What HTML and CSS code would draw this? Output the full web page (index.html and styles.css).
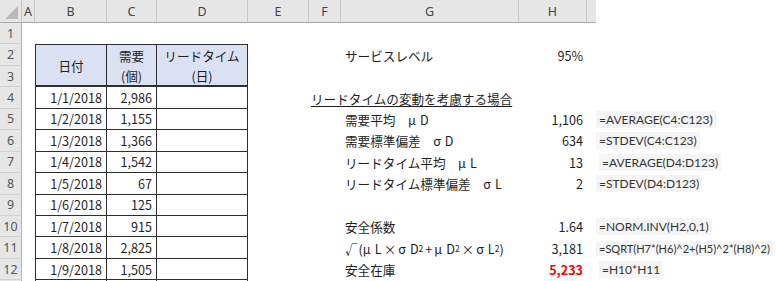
FILE: index.html
```html
<!DOCTYPE html>
<html lang="ja">
<head>
<meta charset="utf-8">
<link rel="stylesheet" href="styles.css">
</head>
<body>
<div class="sheet">
  <!-- column headers -->
  <div class="corner"></div>
  <div class="ch">A</div>
  <div class="ch">B</div>
  <div class="ch">C</div>
  <div class="ch">D</div>
  <div class="ch">E</div>
  <div class="ch">F</div>
  <div class="ch">G</div>
  <div class="ch">H</div>
  <div class="ch ch-end"></div>
  <div class="blank"></div>

  <!-- row 1 -->
  <div class="rh">1</div>
  <div class="c span10"></div>

  <!-- row 2 -->
  <div class="rh">2</div>
  <div class="c"></div>
  <div class="th th-left th-merge">日付</div>
  <div class="th th-top">需要</div>
  <div class="th th-top">リードタイム</div>
  <div class="c span2"></div>
  <div class="c">サービスレベル</div>
  <div class="c num">95%</div>
  <div class="c span2"></div>

  <!-- row 3 -->
  <div class="rh">3</div>
  <div class="c"></div>
  <div class="th th-bottom">(個)</div>
  <div class="th th-bottom">(日)</div>
  <div class="c span2"></div>
  <div class="c"></div>
  <div class="c"></div>
  <div class="c span2"></div>

  <!-- row 4 -->
  <div class="rh">4</div>
  <div class="c"></div>
  <div class="td td-left num">1/1/2018</div>
  <div class="td num">2,986</div>
  <div class="td"></div>
  <div class="c"></div>
  <div class="c span2 heading"><span>リードタイムの変動を考慮する場合</span></div>
  <div class="c"></div>
  <div class="c span2"></div>

  <!-- row 5 -->
  <div class="rh">5</div>
  <div class="c"></div>
  <div class="td td-left num">1/2/2018</div>
  <div class="td num">1,155</div>
  <div class="td"></div>
  <div class="c span2"></div>
  <div class="c">需要平均　<span class="gk">μ</span>D</div>
  <div class="c num">1,106</div>
  <div class="c"></div>
  <div class="fx"><span class="fbox">=AVERAGE(C4:C123)</span></div>

  <!-- row 6 -->
  <div class="rh">6</div>
  <div class="c"></div>
  <div class="td td-left num">1/3/2018</div>
  <div class="td num">1,366</div>
  <div class="td"></div>
  <div class="c span2"></div>
  <div class="c">需要標準偏差　<span class="gk">σ</span>D</div>
  <div class="c num">634</div>
  <div class="c"></div>
  <div class="fx"><span class="fbox">=STDEV(C4:C123)</span></div>

  <!-- row 7 -->
  <div class="rh">7</div>
  <div class="c"></div>
  <div class="td td-left num">1/4/2018</div>
  <div class="td num">1,542</div>
  <div class="td"></div>
  <div class="c span2"></div>
  <div class="c">リードタイム平均　<span class="gk">μ</span>L</div>
  <div class="c num">13</div>
  <div class="c"></div>
  <div class="fx fx-shift"><span class="fbox">=AVERAGE(D4:D123)</span></div>

  <!-- row 8 -->
  <div class="rh">8</div>
  <div class="c"></div>
  <div class="td td-left num">1/5/2018</div>
  <div class="td num">67</div>
  <div class="td"></div>
  <div class="c span2"></div>
  <div class="c">リードタイム標準偏差　<span class="gk">σ</span>L</div>
  <div class="c num">2</div>
  <div class="c"></div>
  <div class="fx"><span class="fbox">=STDEV(D4:D123)</span></div>

  <!-- row 9 -->
  <div class="rh">9</div>
  <div class="c"></div>
  <div class="td td-left num">1/6/2018</div>
  <div class="td num">125</div>
  <div class="td"></div>
  <div class="c span6"></div>

  <!-- row 10 -->
  <div class="rh">10</div>
  <div class="c"></div>
  <div class="td td-left num">1/7/2018</div>
  <div class="td num">915</div>
  <div class="td"></div>
  <div class="c span2"></div>
  <div class="c">安全係数</div>
  <div class="c num">1.64</div>
  <div class="c"></div>
  <div class="fx"><span class="fbox">=NORM.INV(H2,0,1)</span></div>

  <!-- row 11 -->
  <div class="rh">11</div>
  <div class="c"></div>
  <div class="td td-left num">1/8/2018</div>
  <div class="td num">2,825</div>
  <div class="td"></div>
  <div class="c span2"></div>
  <div class="c"><span class="rad">√</span>(<span class="gk">μ</span>L<span class="op">×</span><span class="gk">σ</span>D<sup>2</sup><span class="op">+</span><span class="gk">μ</span>D<sup>2</sup><span class="op">×</span><span class="gk">σ</span>L<sup>2</sup>)</div>
  <div class="c num">3,181</div>
  <div class="c"></div>
  <div class="fx"><span class="fbox fbox-tight">=SQRT(H7*(H6)^2+(H5)^2*(H8)^2)</span></div>

  <!-- row 12 -->
  <div class="rh">12</div>
  <div class="c"></div>
  <div class="td td-left num">1/9/2018</div>
  <div class="td num">1,505</div>
  <div class="td"></div>
  <div class="c span2"></div>
  <div class="c">安全在庫</div>
  <div class="c num red">5,233</div>
  <div class="c"></div>
  <div class="fx fx-shift"><span class="fbox">=H10*H11</span></div>

  <!-- row 13 -->
  <div class="rh"></div>
  <div class="c"></div>
  <div class="td td-left num"></div>
  <div class="td num"></div>
  <div class="td"></div>
  <div class="c span6"></div>
</div>
</body>
</html>
```
FILE: styles.css
```css
html, body {
  margin: 0;
  padding: 0;
  background: #ffffff;
}
body {
  width: 780px;
  height: 281px;
  overflow: hidden;
}
.sheet {
  display: grid;
  grid-template-columns: 22px 13px 72px 50px 91px 61px 32px 178px 68px 9px 1fr;
  grid-template-rows: 23px repeat(13, 21.45px);
  font-family: "Noto Sans CJK JP", sans-serif;
  font-size: 12.6px;
  color: #1e1e1e;
}
.corner {
  position: relative;
  background: #e6e6e6;
  border-right: 1px solid #c4c4c4;
  border-bottom: 1px solid #a8a8a8;
}
.corner::after {
  content: "";
  position: absolute;
  right: 3px;
  bottom: 3px;
  width: 13px;
  height: 13px;
  background: #b9b9b9;
  clip-path: polygon(100% 0, 100% 100%, 0 100%);
}
.ch {
  background: #e6e6e6;
  border-right: 1px solid #c8c8c8;
  border-bottom: 1px solid #a8a8a8;
  display: flex;
  align-items: center;
  justify-content: center;
  font-family: "Noto Sans", sans-serif;
  font-size: 12.5px;
  color: #444;
  box-sizing: border-box;
}
.ch-end {
  border-right: none;
}
.blank {
  background: #fff;
}
.rh {
  background: #e6e6e6;
  border-right: 1px solid #b4b4b4;
  border-bottom: 1px solid #d2d2d2;
  display: flex;
  align-items: center;
  justify-content: center;
  font-family: "Noto Sans", sans-serif;
  font-size: 12.5px;
  color: #555;
  box-sizing: border-box;
}
.c {
  display: flex;
  align-items: center;
  padding: 0 4px;
  white-space: nowrap;
  min-width: 0;
}
.span2 { grid-column: span 2; }
.span3 { grid-column: span 3; }
.span6 { grid-column: span 6; }
.span10 { grid-column: span 10; }
.num {
  justify-content: flex-end;
}
.heading {
  padding-left: 2px;
}
.heading span {
  text-decoration: underline;
  text-underline-offset: 2px;
  text-decoration-thickness: 1px;
}
.red {
  color: #ff0000;
  font-weight: bold;
}
.gk {
  margin-right: 4px;
}
.op {
  padding: 0 2px;
}
.rad {
  margin-right: 1px;
}
sup {
  font-size: 8.5px;
  vertical-align: 5px;
  line-height: 0;
}
.th {
  background: #d9e1f2;
  border-right: 1px solid #2e2e2e;
  display: flex;
  align-items: center;
  justify-content: center;
  white-space: nowrap;
  box-sizing: border-box;
}
.th-left {
  border-left: 1px solid #2e2e2e;
}
.th-top {
  border-top: 1px solid #2e2e2e;
}
.th-merge {
  grid-row: span 2;
  border-top: 1px solid #2e2e2e;
  border-bottom: 2px solid #2e2e2e;
}
.th-bottom {
  border-bottom: 2px solid #2e2e2e;
}
.td {
  display: flex;
  align-items: center;
  padding: 0 4px;
  white-space: nowrap;
  border-right: 1px solid #2e2e2e;
  border-bottom: 1px solid #2e2e2e;
  box-sizing: border-box;
}
.td-left {
  border-left: 1px solid #2e2e2e;
}
.fx {
  display: flex;
  align-items: center;
  padding-left: 0;
  white-space: nowrap;
}
.fx-shift {
  padding-left: 3px;
}
.fbox {
  background: #f5f5f5;
  color: #333;
  font-family: "Lato", sans-serif;
  font-size: 12px;
  padding: 1px 3px;
}
.fbox-tight {
  font-size: 11px;
}
```
